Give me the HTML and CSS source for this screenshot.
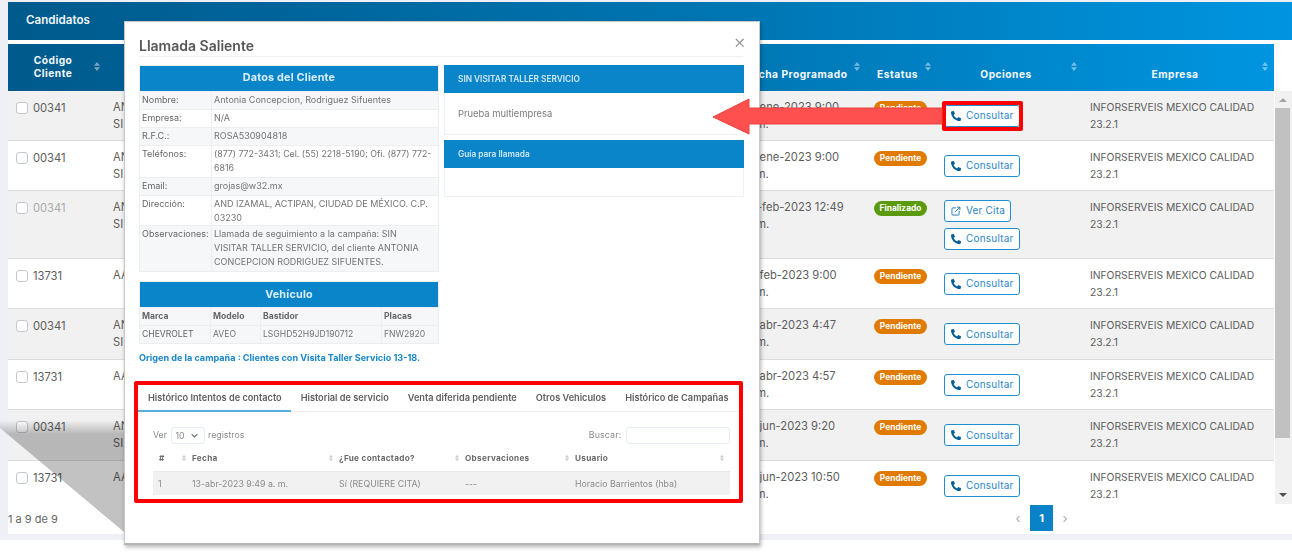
FILE: index.html
```html
<!DOCTYPE html>
<html lang="es">
<head>
<meta charset="utf-8">
<title>Candidatos</title>
<link rel="stylesheet" href="styles.css">
</head>
<body>
<svg class="defs" aria-hidden="true">
  <symbol id="phone" viewBox="0 0 512 512"><path d="M497.39 361.8l-112-48a24 24 0 0 0-28 6.9l-49.6 60.6A370.66 370.66 0 0 1 130.6 204.11l60.6-49.6a23.94 23.94 0 0 0 6.9-28l-48-112A24.16 24.16 0 0 0 122.6.61l-104 24A24 24 0 0 0 0 48c0 256.5 207.9 464 464 464a24 24 0 0 0 23.4-18.6l24-104a24.29 24.29 0 0 0-14.01-27.6z"/></symbol>
  <symbol id="ext" viewBox="0 0 16 16"><path d="M8 3H3a1.500 1.500 0 0 0-1.500 1.500V13A1.500 1.500 0 0 0 3 14.500h8.500A1.500 1.500 0 0 0 13 13V8M6.500 9.500 14 2M9.500 1.800h4.700v4.700" fill="none" stroke="currentColor" stroke-width="1.600"/></symbol>
  <symbol id="sort" viewBox="0 0 8 12"><path d="M4 0 8 5H0zM4 12 0 7h8z"/></symbol>
</svg>
<div class="page">
  <section class="card">
    <header class="card-head">Candidatos</header>
    <div class="list">
      <div class="list-main">
        <table class="grid">
          <colgroup><col class="c-code"><col class="c-name"><col class="c-a"><col class="c-date"><col class="c-status"><col class="c-opt"><col class="c-emp"></colgroup>
          <thead>
            <tr>
              <th class="th-code">Código<br>Cliente<svg class="sort s-code"><use href="#sort"/></svg></th>
              <th></th><th></th>
              <th class="th-date">Fecha Programado<svg class="sort s-date"><use href="#sort"/></svg></th>
              <th class="th-status">Estatus<svg class="sort s-status"><use href="#sort"/></svg></th>
              <th class="th-opt">Opciones<svg class="sort s-opt"><use href="#sort"/></svg></th>
              <th class="th-emp">Empresa<svg class="sort s-emp"><use href="#sort"/></svg></th>
            </tr>
          </thead>
        </table>
        <div class="body-clip">
          <table class="grid">
            <colgroup><col class="c-code"><col class="c-name"><col class="c-a"><col class="c-date"><col class="c-status"><col class="c-opt"><col class="c-emp"></colgroup>
            <tbody>
              <tr><td><span class="chk"></span>00341</td><td class="name">AN<br>SI</td><td></td><td class="date">13-ene-2023 9:00 a. m.</td><td><span class="badge pend">Pendiente</span></td><td class="opt"><a class="btn"><svg class="ic"><use href="#phone"/></svg>Consultar</a></td><td class="emp">INFORSERVEIS MEXICO CALIDAD 23.2.1</td></tr>
              <tr><td><span class="chk"></span>00341</td><td class="name">AN<br>SI</td><td></td><td class="date">13-ene-2023 9:00 a. m.</td><td><span class="badge pend">Pendiente</span></td><td class="opt"><a class="btn"><svg class="ic"><use href="#phone"/></svg>Consultar</a></td><td class="emp">INFORSERVEIS MEXICO CALIDAD 23.2.1</td></tr>
              <tr><td class="off"><span class="chk"></span>00341</td><td class="name">AN<br>SI</td><td></td><td class="date">08-feb-2023 12:49 p. m.</td><td><span class="badge fin">Finalizado</span></td><td class="opt"><a class="btn short"><svg class="ic"><use href="#ext"/></svg>Ver Cita</a><a class="btn"><svg class="ic"><use href="#phone"/></svg>Consultar</a></td><td class="emp">INFORSERVEIS MEXICO CALIDAD 23.2.1</td></tr>
              <tr><td><span class="chk"></span>13731</td><td class="name">AA</td><td></td><td class="date">13-feb-2023 9:00 a. m.</td><td><span class="badge pend">Pendiente</span></td><td class="opt"><a class="btn"><svg class="ic"><use href="#phone"/></svg>Consultar</a></td><td class="emp">INFORSERVEIS MEXICO CALIDAD 23.2.1</td></tr>
              <tr class="wide"><td><span class="chk"></span>00341</td><td class="name">AN<br>SI</td><td></td><td class="date">13-abr-2023 4:47 p. m.</td><td><span class="badge pend">Pendiente</span></td><td class="opt"><a class="btn"><svg class="ic"><use href="#phone"/></svg>Consultar</a></td><td class="emp">INFORSERVEIS MEXICO CALIDAD 23.2.1</td></tr>
              <tr><td><span class="chk"></span>13731</td><td class="name">AA</td><td></td><td class="date">13-abr-2023 4:57 p. m.</td><td><span class="badge pend">Pendiente</span></td><td class="opt"><a class="btn"><svg class="ic"><use href="#phone"/></svg>Consultar</a></td><td class="emp">INFORSERVEIS MEXICO CALIDAD 23.2.1</td></tr>
              <tr class="wide"><td><span class="chk"></span>00341</td><td class="name">AN<br>SI</td><td></td><td class="date">13-jun-2023 9:20 a. m.</td><td><span class="badge pend">Pendiente</span></td><td class="opt"><a class="btn"><svg class="ic"><use href="#phone"/></svg>Consultar</a></td><td class="emp">INFORSERVEIS MEXICO CALIDAD 23.2.1</td></tr>
              <tr><td><span class="chk"></span>13731</td><td class="name">AA</td><td></td><td class="date">13-jun-2023 10:50 a. m.</td><td><span class="badge pend">Pendiente</span></td><td class="opt"><a class="btn"><svg class="ic"><use href="#phone"/></svg>Consultar</a></td><td class="emp">INFORSERVEIS MEXICO CALIDAD 23.2.1</td></tr>
            </tbody>
          </table>
        </div>
        <footer class="list-foot">
          <span>1 a 9 de 9</span>
          <nav class="pager"><span class="chev">‹</span><span class="pg">1</span><span class="chev">›</span></nav>
        </footer>
      </div>
      <aside class="scroll">
        <span class="tri up"></span>
        <span class="thumb"></span>
        <span class="tri down"></span>
      </aside>
    </div>
  </section>

  <div class="cast"></div>

  <div class="modal">
    <div class="m-head"><h2>Llamada Saliente</h2><span class="close">×</span></div>
    <div class="m-cols">
      <div class="m-left">
        <table class="info">
          <colgroup><col class="lab"><col></colgroup>
          <tr><th colspan="2" class="tt">Datos del Cliente</th></tr>
          <tr class="z"><td>Nombre:</td><td>Antonia Concepcion, Rodriguez Sifuentes</td></tr>
          <tr><td>Empresa:</td><td>N/A</td></tr>
          <tr class="z"><td>R.F.C.:</td><td>ROSA530904818</td></tr>
          <tr><td>Teléfonos:</td><td class="tel">(877) 772-3431; Cel. (55) 2218-5190; Ofi. (877) 772-<br>6816</td></tr>
          <tr class="z"><td>Email:</td><td>grojas@w32.mx</td></tr>
          <tr class="tight"><td>Dirección:</td><td>AND IZAMAL, ACTIPAN, CIUDAD DE MÉXICO. C.P. 03230</td></tr>
          <tr class="z"><td>Observaciones:</td><td>Llamada de seguimiento a la campaña: SIN<br>VISITAR TALLER SERVICIO, del cliente ANTONIA<br>CONCEPCION RODRIGUEZ SIFUENTES.</td></tr>
        </table>
        <table class="info veh">
          <colgroup><col class="v1"><col class="v2"><col class="v3"><col></colgroup>
          <tr><th colspan="4" class="tt">Vehículo</th></tr>
          <tr class="z strong"><td>Marca</td><td>Modelo</td><td>Bastidor</td><td>Placas</td></tr>
          <tr class="z"><td>CHEVROLET</td><td>AVEO</td><td>LSGHD52H9JD190712</td><td>FNW2920</td></tr>
        </table>
        <p class="origin">Origen de la campaña : Clientes con Visita Taller Servicio 13-18.</p>
      </div>
      <div class="m-right">
        <div class="panel"><h3>SIN VISITAR TALLER SERVICIO</h3><p>Prueba multiempresa</p></div>
        <div class="panel"><h3>Guía para llamada</h3><p class="empty"></p></div>
      </div>
    </div>
    <div class="tabs-wrap">
      <ul class="tabs">
        <li class="on">Histórico Intentos de contacto</li>
        <li>Historial de servicio</li>
        <li>Venta diferida pendiente</li>
        <li>Otros Vehiculos</li>
        <li>Histórico de Campañas</li>
      </ul>
      <div class="dt-tools">
        <label>Ver <span class="sel">10<svg class="sel-ic" viewBox="0 0 10 6"><path d="M1 1l4 4 4-4" fill="none" stroke="currentColor" stroke-width="1.500"/></svg></span> registros</label>
        <label class="search">Buscar: <span class="inp"></span></label>
      </div>
      <table class="dt">
        <colgroup><col class="d1"><col class="d2"><col class="d3"><col class="d4"><col></colgroup>
        <thead><tr><th>#<svg class="ds"><use href="#sort"/></svg></th><th>Fecha<svg class="ds"><use href="#sort"/></svg></th><th>¿Fue contactado?<svg class="ds"><use href="#sort"/></svg></th><th>Observaciones<svg class="ds"><use href="#sort"/></svg></th><th>Usuario<svg class="ds"><use href="#sort"/></svg></th></tr></thead>
        <tbody><tr><td>1</td><td>13-abr-2023 9:49 a. m.</td><td>Sí (REQUIERE CITA)</td><td>---</td><td>Horacio Barrientos (hba)</td></tr></tbody>
      </table>
    </div>
  </div>

  <div class="mark mark-btn"></div>
  <div class="mark mark-tabs"></div>
  <svg class="arrow" viewBox="0 0 232 38" aria-hidden="true"><polygon points="1,19 37,1 37,10 230,10 230,26 37,26 37,36"/></svg>
</div>
</body>
</html>
```

FILE: styles.css
```css
* { box-sizing: border-box; }
html, body { margin: 0; height: 556px; overflow: hidden; background: #fff; }
body { font-family: Inter, "Liberation Sans", sans-serif; color: #555; }
.defs { position: absolute; width: 0; height: 0; }
.page { position: relative; width: 1292px; height: 540px; background: #eff0f5; padding: 2px 0 6px 8px; filter: blur(.35px); }
.card { background: #fff; height: 532px; }
.card-head { height: 38px; padding: 0 18px; line-height: 36px; color: #f2f7fb; font-size: 11.6px; font-weight: 600; background: linear-gradient(90deg, #005a8c, #0078b6 60%, #0095e0); }
.list { display: flex; padding-top: 4px; }
.list-main { width: 1266px; }
.grid { width: 1266px; border-collapse: separate; border-spacing: 0; table-layout: fixed; font-size: 11.2px; }
.c-code { width: 92px; } .c-name { width: 260px; } .c-a { width: 374px; } .c-date { width: 130px; }
.c-status { width: 71px; } .c-opt { width: 146px; } .c-emp { width: 193px; }
.grid thead tr { height: 47px; background: linear-gradient(90deg, #005a8c, #0078b6 60%, #0095e0); }
.grid th { position: relative; color: #f4f9fc; font-size: 10.2px; font-weight: 700; letter-spacing: .5px; line-height: 14px; padding: 12px 0 0; text-align: center; vertical-align: middle; }
.grid th.th-code { padding: 0 2px 2px 0; line-height: 13px; }
.grid th.th-date { text-align: left; padding-left: 12px; }
.grid th.th-status, .grid th.th-opt { padding-right: 4px; }
.grid th.th-emp { padding-right: 5px; }
.sort { position: absolute; top: 18px; right: 4px; width: 6px; height: 9px; fill: rgba(255,255,255,.45); }
.s-code { right: 0; } .s-emp { right: 6px; }
.body-clip { height: 413px; overflow: hidden; }
.grid tbody tr { background: #fff; }
.grid tbody tr:nth-child(odd) { background: #f1f1f1; }
.grid td { padding: 8px 8px 7px 9px; line-height: 17px; border-bottom: 1px solid #dcdcdc; vertical-align: top; color: #5d5d5d; }
.grid tbody tr.wide td { padding-bottom: 8px; }
.grid td:first-child { padding: 9px 0 6px 8px; white-space: nowrap; }
.grid td.off { color: #aaa; }
.grid td.name { padding-left: 13px; }
.grid td.date { padding-right: 20px; }
.grid td.emp { padding-right: 0; font-size: 10.3px; }
.grid td.opt { padding: 8.5px 0 8.5px 9px; vertical-align: middle; }
.chk { display: inline-block; width: 12px; height: 12px; margin-right: 5px; vertical-align: -2px; background: #fff; border: 1px solid #c3c7d2; border-radius: 3px; }
.badge { display: block; width: 53px; height: 15px; margin: 2px 0 0 1px; border-radius: 8px; text-align: center; font-size: 8.4px; line-height: 14px; font-weight: 700; color: #fff; }
.pend { background: #e07b00; }
.fin { background: #5b9b0b; }
.btn { display: flex; align-items: center; width: 76px; height: 22px; padding-left: 6px; border: 1px solid #1e8fd0; border-radius: 3px; color: #2a86c6; font-size: 10px; letter-spacing: .2px; background: #fff; }
.btn + .btn { margin-top: 6px; }
.btn.short { width: 67px; }
.ic { width: 10px; height: 10px; margin-right: 5px; fill: #045d96; color: #2a7fbd; }
.list-foot { display: flex; height: 30px; font-size: 11px; color: #666; background: #fff; padding-top: 8px; position: relative; }
.pager { position: absolute; top: 1px; left: 1003px; display: flex; align-items: center; gap: 5px; color: #aab; }
.chev { font-size: 13px; width: 14px; text-align: center; }
.pg { width: 23px; height: 26px; line-height: 26px; text-align: center; color: #fff; font-weight: 700; background: #0a82c8; }
.scroll { position: relative; width: 17px; margin: 47px 0 0 1px; height: 413px; background: #f1f1f1; padding-top: 17px; }
.tri { position: absolute; left: 4px; border-left: 4px solid transparent; border-right: 4px solid transparent; }
.tri.up { top: 7px; border-bottom: 4px solid #a5a5a5; }
.tri.down { bottom: 7px; border-top: 4px solid #505050; }
.thumb { display: block; width: 15px; height: 330px; background: #c1c1c1; }

.cast { position: absolute; left: 0; top: 420px; width: 124px; height: 112px; background: linear-gradient(180deg, rgba(0,0,0,0), rgba(0,0,0,.24) 14px); clip-path: polygon(0 0, 100% 0, 100% 100%, 0 8px); }

.modal { position: absolute; left: 124px; top: 21px; width: 636px; height: 524px; padding: 0 16px 0 14px; background: #fff; border: 1px solid #c8c8c8; border-bottom: 2px solid #b5b5b5; box-shadow: 1px 2px 4px rgba(0,0,0,.3); font-size: 9px; }
.m-head { display: flex; justify-content: space-between; height: 35px; border-bottom: 1px solid #f0f0f0; }
.m-head h2 { margin: 15px 0 0; font-size: 14px; font-weight: 600; color: #575757; line-height: 17px; }
.close { font-size: 19px; line-height: 19px; margin: 10px -3px 0 0; color: #909090; font-weight: 300; }
.m-cols { display: grid; grid-template-columns: 300px 300px; gap: 5px; margin-top: 8px; height: 320px; }
.info { width: 300px; border-collapse: collapse; table-layout: fixed; border: 1px solid #eceef1; line-height: 14px; color: #737373; }
.lab { width: 72px; }
.info th.tt { height: 26px; padding-bottom: 2px; background: #0a85c9; color: #d9eef9; font-size: 10.8px; letter-spacing: .2px; font-weight: 700; text-align: center; }
.info.veh th.tt { padding-bottom: 0; }
.info td { padding: 1px 2px 2px; border: 1px solid #eceef1; vertical-align: top; height: 18px; }
.info td.tel { font-size: 8.8px; }
.info tr.tight td { padding: 1px 2px 0; }
.info tr.z td { background: #f6f7f9; }
.info td:first-child { color: #666; }
.veh { margin-top: 9px; font-size: 8.6px; }
.v1 { width: 71px; } .v2 { width: 50px; } .v3 { width: 121px; }
.info tr.strong td { font-weight: 700; color: #666; }
.origin { margin: 8px 0 0; color: #1987c9; font-weight: 700; font-size: 9.1px; line-height: 12px; }
.panel { border: 1px solid #f0f0f0; margin-bottom: 5px; }
.panel h3 { margin: -1px -1px 0; height: 28px; padding: 0 14px; background: #0a85c9; color: #cfe8f6; font-size: 8.3px; line-height: 28px; font-weight: 600; }
.panel p { margin: 0; padding: 14px 13px; height: 41px; color: #7a7a7a; font-size: 9.4px; line-height: 13px; }
.panel p.empty { height: 28px; }
.tabs-wrap { margin: 0 0 0 -2px; }
.tabs { display: flex; list-style: none; margin: 0; padding: 0; border-bottom: 1px solid #eef1f4; height: 27px; font-weight: 600; font-size: 9.2px; color: #5f5f5f; }
.tabs li { padding: 6px 9.5px 0; white-space: nowrap; line-height: 13px; }
.tabs li.on { border-bottom: 2px solid #5aaede; height: 27px; padding-left: 11px; }
.dt-tools { display: flex; justify-content: space-between; align-items: center; width: 577px; margin: 15px 0 0 16px; color: #8a8a8a; height: 16px; font-size: 8.8px; }
.sel { display: inline-flex; justify-content: space-between; align-items: center; width: 34px; height: 17px; padding: 0 6px 0 4px; margin: 0 1px; border: 1px solid #e6ecf3; border-radius: 3px; vertical-align: middle; }
.sel-ic { width: 7px; height: 5px; color: #666; }
.search { letter-spacing: .15px; }
.inp { display: inline-block; width: 104px; height: 17px; margin-left: 2px; border: 1px solid #e6ecf3; border-radius: 3px; vertical-align: middle; }
.dt { width: 577px; margin: 7px 0 0 16px; border-collapse: collapse; table-layout: fixed; }
.d1 { width: 39px; } .d2 { width: 147px; } .d3 { width: 126px; } .d4 { width: 110px; }
.dt th { position: relative; height: 21px; padding: 0 0 5px; text-align: left; font-size: 8.2px; font-weight: 700; color: #6a6a6a; letter-spacing: .3px; border-bottom: 1px solid #e9e9e9; }
.dt th:first-child { padding-left: 6px; }
.ds { position: absolute; right: 6px; top: 5px; width: 4px; height: 6px; fill: #c8c8c8; }
.dt td { height: 24px; background: #f1f1f1; color: #8a8a8a; font-size: 8.8px; padding: 0; }
.dt td:first-child { padding-left: 5px; }

.mark { position: absolute; border: 4px solid #f00; border-radius: 2px; }
.mark-btn { left: 942px; top: 101px; width: 81px; height: 30px; }
.mark-tabs { left: 134px; top: 381px; width: 609px; height: 122px; }
.arrow { position: absolute; left: 712px; top: 98px; width: 232px; height: 38px; fill: #ff5050; stroke: #e8423f; stroke-width: 1; }
```
